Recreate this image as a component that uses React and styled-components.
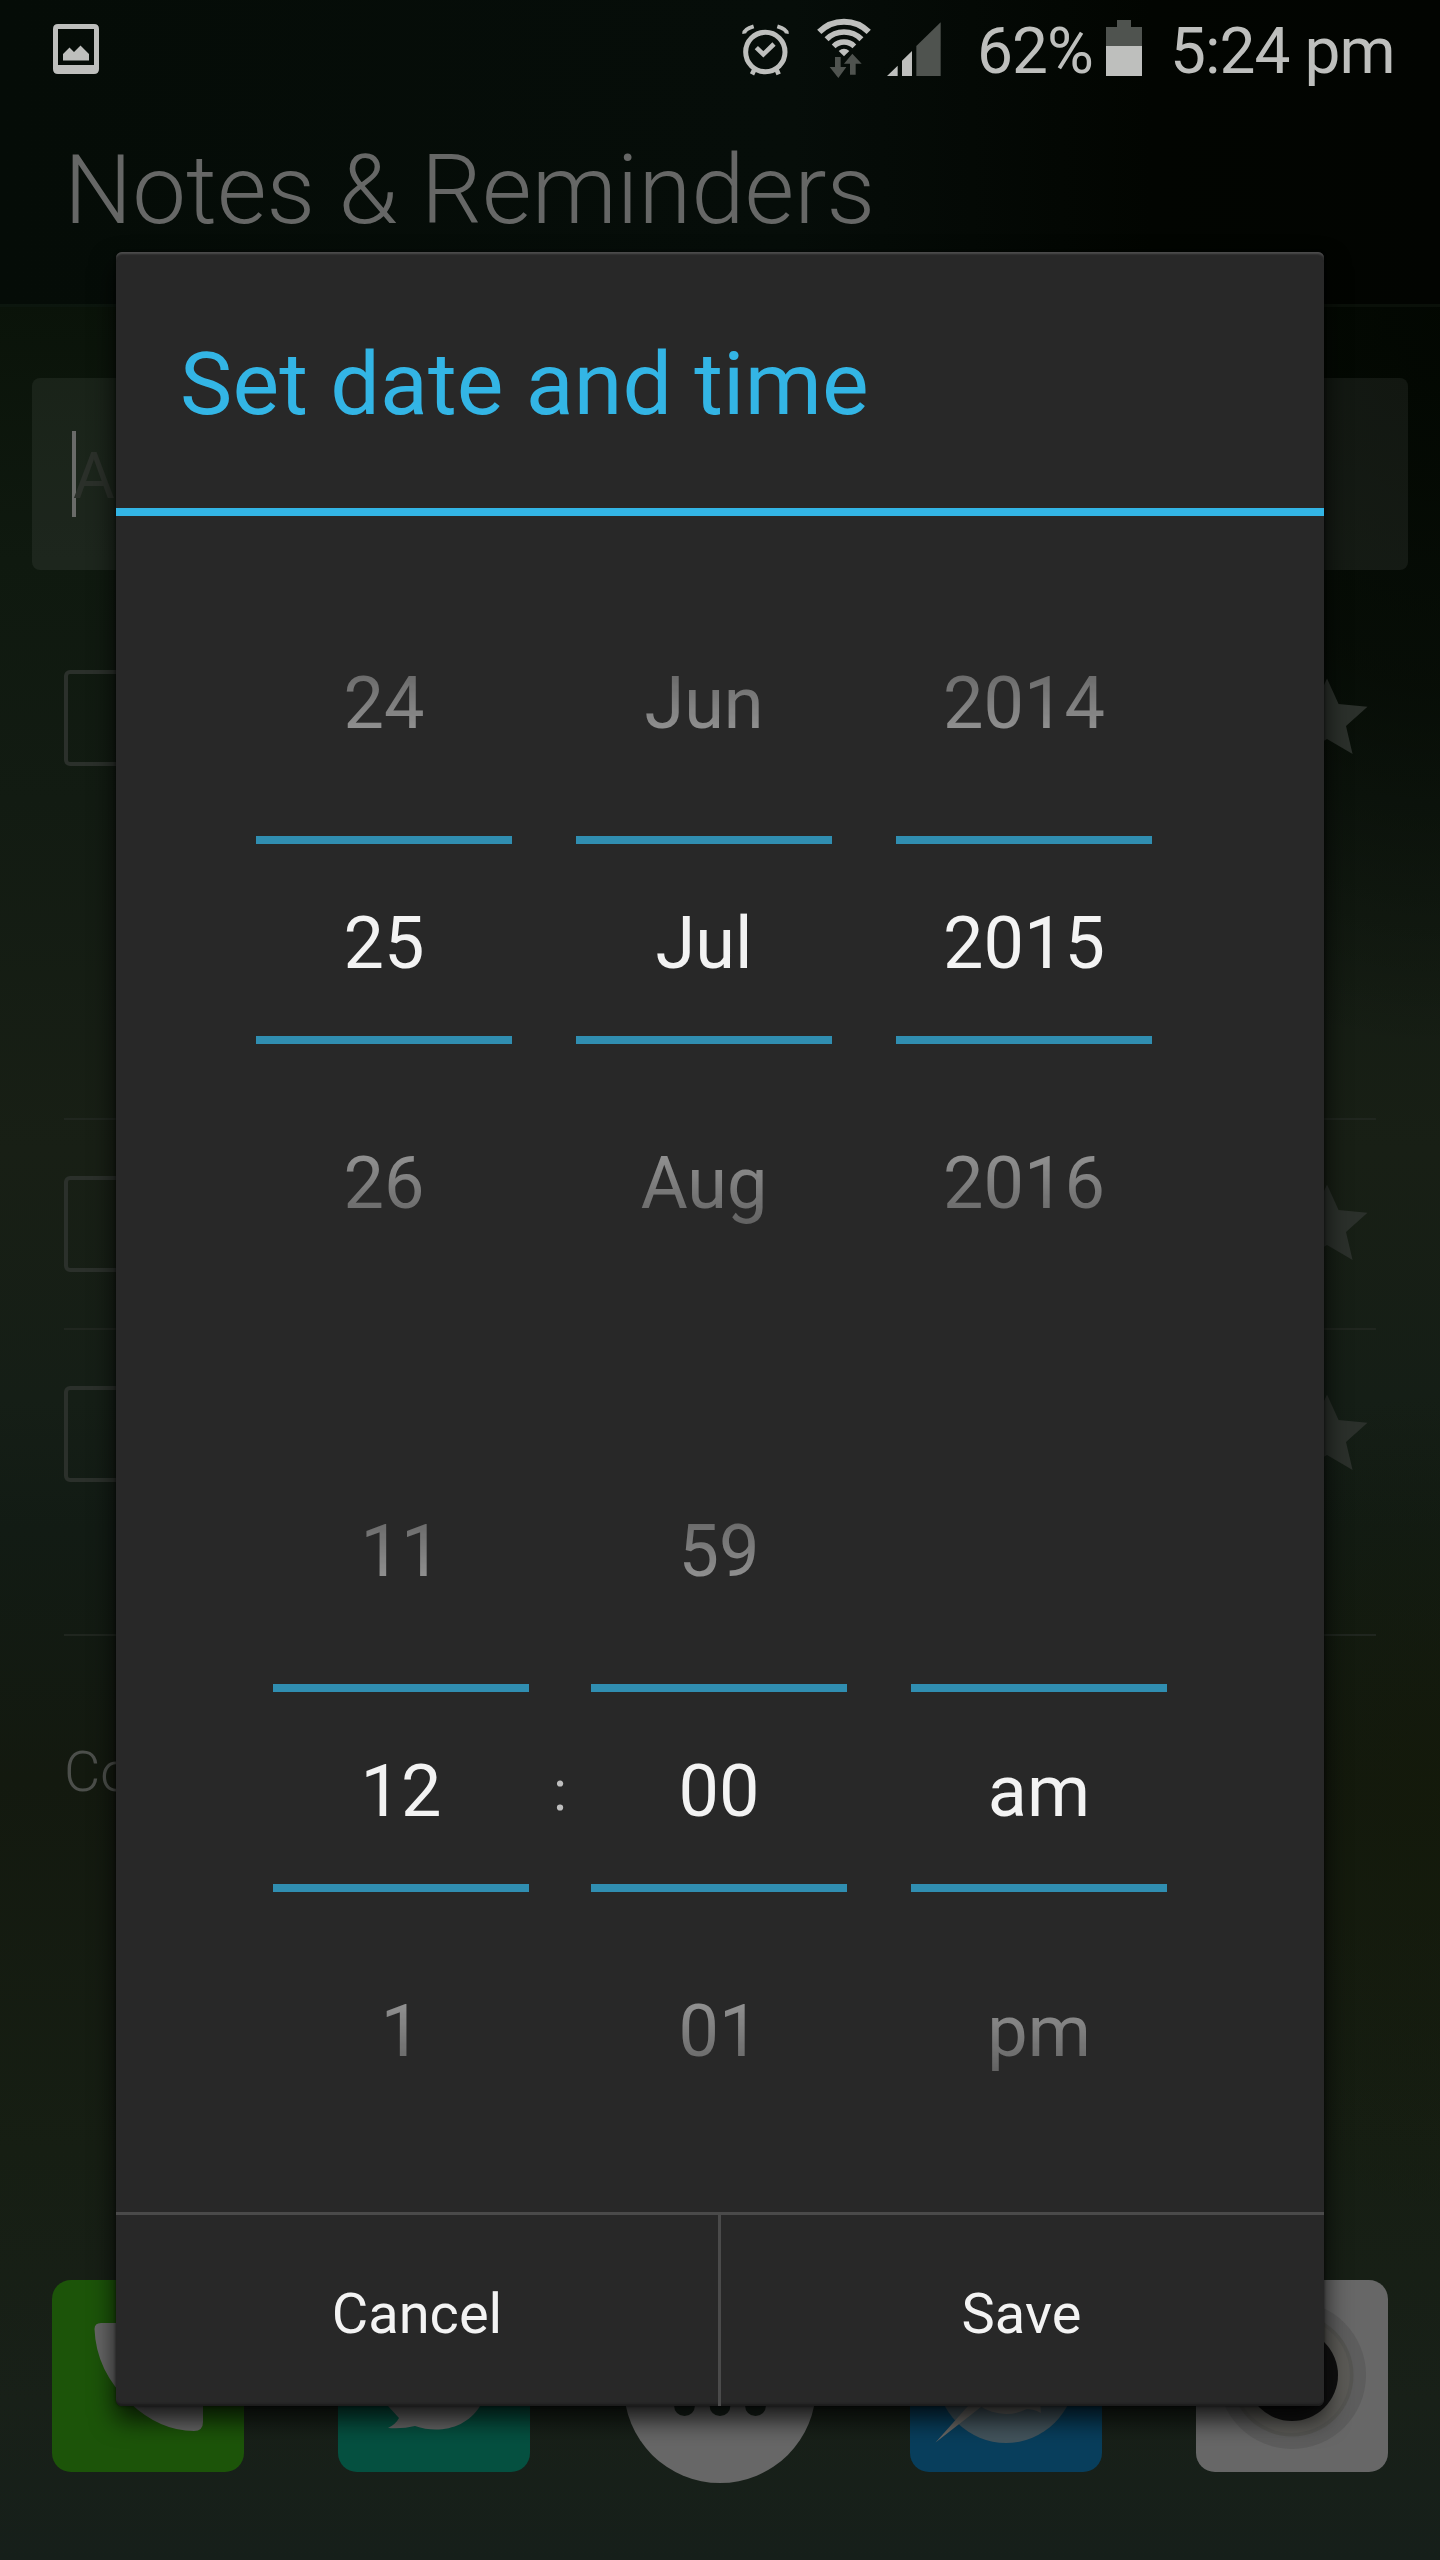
import React from "react";
import styled, { createGlobalStyle, css } from "styled-components";

const GlobalStyle = createGlobalStyle`
  *, *::before, *::after { box-sizing: border-box; }
  body { margin: 0; background: #121a11; }
`;

const LIGHT = "#bebfbd";
const DIM = "#4f534f";
const BLUE = "#33b5e5";

const Screen = styled.div`
  position: relative;
  width: 1440px;
  height: 2560px;
  overflow: hidden;
  display: flex;
  flex-direction: column;
  font-family: Roboto, "Noto Sans", sans-serif;
  background:
    radial-gradient(ellipse 520px 720px at 1440px 330px, rgba(1, 5, 0, 0.85), rgba(1, 5, 0, 0.6) 50%, rgba(1, 5, 0, 0)),
    radial-gradient(ellipse 260px 420px at 1440px 1800px, rgba(20, 26, 8, 0.6), rgba(20, 26, 8, 0)),
    linear-gradient(to bottom, #0a1309 300px, #0f190f 560px, #121b12 800px, #181f15 1150px, #151e16 1400px, #121b14 1530px, #13190f 1780px, #161e13 2150px, #182018 2400px, #161f1a 2560px);
`;

const Header = styled.header`
  flex: none;
  height: 307px;
  border-bottom: 3px solid rgba(40, 60, 40, 0.22);
  background: linear-gradient(to right, #050c07 0%, #060d09 55%, #020501 80%, #020401 100%);
`;

const StatusBar = styled.div`
  display: flex;
  height: 100px;
  padding: 0 0 0 53px;
`;

const Spacer = styled.div`
  flex: 1;
`;

const StatusIcon = styled.svg`
  flex: none;
  display: block;
  height: 100px;
  width: ${(p) => p.$w}px;
  margin-right: ${(p) => p.$gap || 0}px;
`;

const StatusText = styled.span`
  flex: none;
  width: ${(p) => p.$w}px;
  font-size: 64px;
  letter-spacing: -0.95px;
  line-height: 104px;
  color: ${LIGHT};
  white-space: nowrap;
`;

const PageTitle = styled.h1`
  margin: 0;
  padding-left: 64px;
  font-size: 96px;
  font-weight: 300;
  line-height: 180px;
  color: #666766;
  white-space: nowrap;
`;

const AddField = styled.div`
  flex: none;
  display: flex;
  align-items: flex-start;
  height: 192px;
  margin: 71px 32px 0;
  padding: 53px 40px 0;
  border-radius: 8px;
  background: rgba(120, 135, 125, 0.13);
`;

const Caret = styled.span`
  width: 4px;
  height: 86px;
  background: #6a6b69;
`;

const Placeholder = styled.span`
  margin-left: -3px;
  font-size: 64px;
  line-height: 92px;
  color: #2b302a;
`;

const NoteList = styled.div`
  flex: none;
  margin-top: 44px;
  padding: 0 64px;
`;

const NoteRow = styled.div`
  display: flex;
  justify-content: space-between;
  align-items: flex-start;
  height: ${(p) => p.$h}px;
  padding: 56px 8px 0 0;
  border-bottom: 2px solid #20261f;
`;

const CheckBox = styled.span`
  width: 96px;
  height: 96px;
  border: 4px solid #2b302b;
  border-radius: 6px;
`;

const Star = styled.svg`
  width: 82px;
  height: 77px;
  margin-top: 8px;
`;

const FooterLabel = styled.div`
  flex: none;
  padding: 96px 64px 0;
  font-size: 56px;
  font-weight: 300;
  line-height: 80px;
  color: #4c4f4b;
`;

const Dock = styled.nav`
  flex: none;
  display: flex;
  gap: 94px;
  height: 280px;
  margin-top: auto;
  padding-left: 52px;
`;

const dockShape = {
  tile: css`
    border-radius: 19px;
  `,
  round: css`
    margin-top: 11px;
    border-radius: 50%;
  `,
};

const DockIcon = styled.div`
  flex: none;
  width: 192px;
  height: 192px;
  background: ${(p) => p.$bg};
  ${(p) => dockShape[p.$shape || "tile"]}
`;

const DockArt = styled.svg`
  display: block;
  width: 192px;
  height: 192px;
`;

const Dialog = styled.section`
  position: absolute;
  left: 116px;
  top: 252px;
  width: 1208px;
  height: 2154px;
  display: flex;
  flex-direction: column;
  border-radius: 6px;
  background: #282828;
  box-shadow:
    0 0 3px rgba(0, 0, 0, 0.6),
    0 13px 26px rgba(0, 0, 0, 0.8),
    inset 0 3px 2px -1px #4c4c4c,
    inset 0 -3px 2px -1px #1c1c1c;
`;

const DialogTitle = styled.h2`
  flex: none;
  height: 264px;
  margin: 0;
  padding: 8px 64px 0;
  border-bottom: 8px solid ${BLUE};
  font-size: 88px;
  font-weight: 400;
  letter-spacing: 0.15px;
  line-height: 248px;
  color: ${BLUE};
  white-space: nowrap;
`;

const PickerArea = styled.div`
  flex: 1;
  display: flex;
  flex-direction: column;
  gap: 128px;
  padding-top: 67px;
`;

const PickerGroup = styled.div`
  display: flex;
  padding-left: ${(p) => p.$indent}px;
`;

const Wheel = styled.div`
  display: grid;
  grid-template-rows: repeat(3, 240px);
  width: 256px;
  text-align: center;
  font-size: 72px;
  color: #f3f3f3;
`;

const Neighbour = styled.span`
  line-height: 241px;
  mask-image: linear-gradient(
    ${(p) => (p.$after ? "to top" : "to bottom")},
    rgba(0, 0, 0, 0.03),
    rgba(0, 0, 0, 0.82)
  );
`;

const Selected = styled.span`
  height: 208px;
  margin-top: 13px;
  padding-top: 7px;
  border-top: 8px solid #308eb1;
  border-bottom: 8px solid #308eb1;
  line-height: 185px;
`;

const Gap = styled.span`
  width: ${(p) => p.$w}px;
  padding-top: 240px;
  text-align: center;
  font-size: 56px;
  line-height: 240px;
  color: #bebebe;
`;

const Actions = styled.footer`
  flex: none;
  display: flex;
  height: 194px;
  border-top: 3px solid #4a4a4a;
`;

const Action = styled.button`
  flex: none;
  width: 602px;
  padding: 7px 0 0;
  border: 0;
  background: none;
  font-family: inherit;
  font-size: 56px;
  line-height: 184px;
  color: #f3f3f3;

  & + & {
    width: 606px;
    padding-right: 2px;
    border-left: 3px solid #4a4a4a;
  }
`;

function NumberWheel({ values }) {
  return (
    <Wheel>
      <Neighbour>{values[0]}</Neighbour>
      <Selected>{values[1]}</Selected>
      <Neighbour $after>{values[2]}</Neighbour>
    </Wheel>
  );
}

function Note({ height }) {
  return (
    <NoteRow $h={height}>
      <CheckBox />
      <Star viewBox="0 0 82 77">
        <path
          d="M41 0.5 L52.6 26 L81.5 28.8 L60 48 L66.6 76 L41 61 L15.4 76 L22 48 L0.5 28.8 L29.4 26 Z"
          fill="#2b302b"
        />
      </Star>
    </NoteRow>
  );
}

function StatusRow() {
  return (
    <StatusBar>
      <StatusIcon $w={46} viewBox="53 0 46 100">
        <path
          fill={LIGHT}
          fillRule="evenodd"
          d="M58 24 H94 Q99 24 99 29 V69 Q99 74 94 74 H58 Q53 74 53 69 V29 Q53 24 58 24 Z M58 29 V65 H94 V29 Z"
        />
        <path fill={LIGHT} d="M63 60.500 V54 L69.500 47.500 L74 52 L80.500 45.500 L89 54 V60.500 Z" />
      </StatusIcon>
      <Spacer />
      <StatusIcon $w={47} $gap={27} viewBox="35 0 141 300">
        <g fill="none" stroke={LIGHT}>
          <circle cx="105" cy="156" r="59" strokeWidth="15" />
          <path d="M78 143 L99 163 L131 132" strokeWidth="14" />
          <path d="M74 205 L65 223 M137 205 L145 223" strokeWidth="14" />
          <path d="M42 101 Q40 88 70 79 M169 101 Q171 88 141 79" strokeWidth="12" />
        </g>
      </StatusIcon>
      <StatusIcon $w={56} $gap={15} viewBox="259 0 168 300">
        <g fill="none" stroke={LIGHT}>
          <path d="M268.800 95.800 A105 105 0 0 1 417.200 95.800" strokeWidth="18" />
          <path d="M290.700 117.700 A74 74 0 0 1 395.300 117.700" strokeWidth="17" />
          <path d="M311.900 138.900 A44 44 0 0 1 374.100 138.900" strokeWidth="16" />
        </g>
        <path fill={LIGHT} d="M343 169 L327 153 Q343 140 359 153 Z" />
        <path
          fill={DIM}
          d="M316 171 H333 V201 H350 L326 234 L300 201 H316 Z M361 224 V191 H343 L368 161 L396 191 H378 V224 Z"
        />
      </StatusIcon>
      <StatusIcon $w={54} $gap={36} viewBox="471 0 162 300">
        <path fill={LIGHT} d="M471 228 L503 197 V228 Z M516 228 V182 L546 153 V228 Z" />
        <path fill={DIM} d="M559 228 V138 L632 67 V228 Z" />
      </StatusIcon>
      <StatusText $w={129}>62%</StatusText>
      <StatusIcon $w={36} $gap={28} viewBox="0 0 36 100">
        <path fill={DIM} d="M11 20 H25 V27 H36 V46 H0 V27 H11 Z" />
        <path fill={LIGHT} d="M0 46 H36 V76 H0 Z" />
      </StatusIcon>
      <StatusText $w={270}>5:24 pm</StatusText>
    </StatusBar>
  );
}

function AppDock() {
  return (
    <Dock>
      <DockIcon $bg="#1c5409">
        <DockArt viewBox="52 2280 192 192">
          <path
            fill="#666"
            d="M94.500 2329 Q94.500 2323 101 2323 H120 L135 2360 L165 2392 L203 2404 V2422 Q203 2431 194 2431 Q160 2431 130 2403 Q96 2371 94.500 2329 Z"
          />
        </DockArt>
      </DockIcon>
      <DockIcon $bg="#055040">
        <DockArt viewBox="338 2280 192 192">
          <path
            fill="#666"
            d="M388 2406 L399 2418 Q396 2424 388 2428 Q403 2429 415 2426 C438 2434 466 2429 480 2406 L480 2380 H388 Z"
          />
        </DockArt>
      </DockIcon>
      <DockIcon $bg="#676767" $shape="round">
        <DockArt viewBox="624 2291 192 192">
          <g fill="#17211a">
            <circle cx="684.500" cy="2405.500" r="10.500" />
            <circle cx="720" cy="2405.500" r="10.500" />
            <circle cx="755.500" cy="2405.500" r="10.500" />
          </g>
        </DockArt>
      </DockIcon>
      <DockIcon $bg="#083e5c">
        <DockArt viewBox="910 2280 192 192">
          <circle cx="1006" cy="2374" r="69" fill="#43545c" />
          <ellipse cx="1006" cy="2386" rx="37" ry="28" fill="#666564" />
          <path fill="#666564" d="M1026 2409 Q1034 2409 1041 2413 L1040 2400 H1026 Z" />
          <path fill="#6a6865" d="M935.500 2442.500 L968 2406 L990 2388 L981 2407 Z" />
        </DockArt>
      </DockIcon>
      <DockIcon $bg="#676767">
        <DockArt viewBox="1196 2280 192 192">
          <circle cx="1292" cy="2375" r="74" fill="#5d5d5d" />
          <circle cx="1292" cy="2375" r="61.500" fill="#555552" />
          <circle cx="1292" cy="2375" r="58" fill="#5b5a56" />
          <circle cx="1292" cy="2375" r="46" fill="#101010" />
        </DockArt>
      </DockIcon>
    </Dock>
  );
}

export default function App() {
  return (
    <>
      <GlobalStyle />
      <Screen>
        <Header>
          <StatusRow />
          <PageTitle>Notes &amp; Reminders</PageTitle>
        </Header>
        <AddField>
          <Caret />
          <Placeholder>A</Placeholder>
        </AddField>
        <NoteList>
          <Note height={506} />
          <Note height={210} />
          <Note height={306} />
        </NoteList>
        <FooterLabel>Co</FooterLabel>
        <AppDock />
        <Dialog>
          <DialogTitle>Set date and time</DialogTitle>
          <PickerArea>
            <PickerGroup $indent={140}>
              <NumberWheel values={["24", "25", "26"]} />
              <Gap $w={64} />
              <NumberWheel values={["Jun", "Jul", "Aug"]} />
              <Gap $w={64} />
              <NumberWheel values={["2014", "2015", "2016"]} />
            </PickerGroup>
            <PickerGroup $indent={157}>
              <NumberWheel values={["11", "12", "1"]} />
              <Gap $w={62}>:</Gap>
              <NumberWheel values={["59", "00", "01"]} />
              <Gap $w={64} />
              <NumberWheel values={["", "am", "pm"]} />
            </PickerGroup>
          </PickerArea>
          <Actions>
            <Action>Cancel</Action>
            <Action>Save</Action>
          </Actions>
        </Dialog>
      </Screen>
    </>
  );
}
